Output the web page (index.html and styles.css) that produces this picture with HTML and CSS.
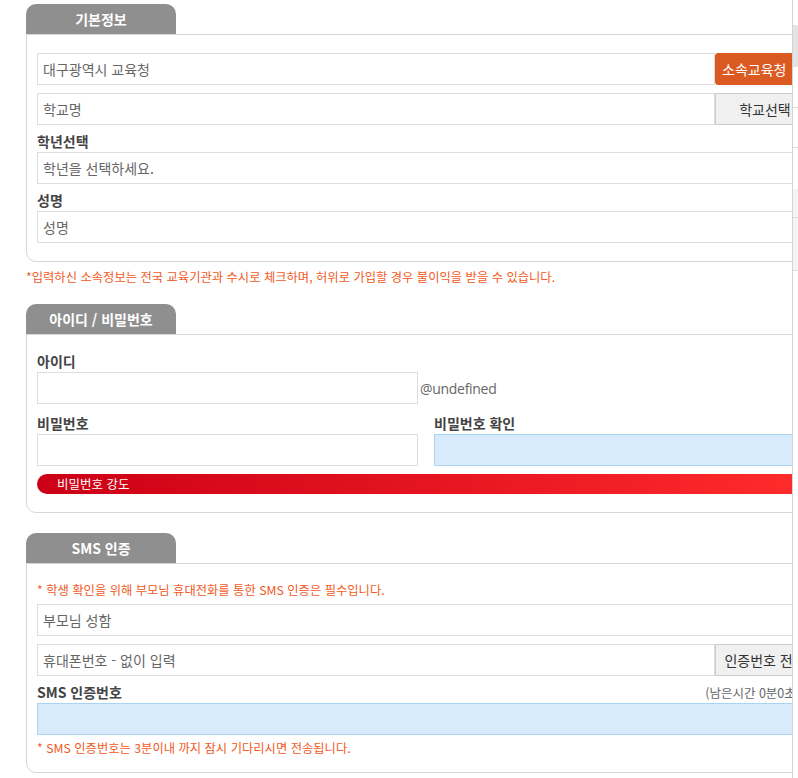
FILE: index.html
```html
<!DOCTYPE html>
<html lang="ko">
<head>
<meta charset="utf-8">
<title>회원가입</title>
<link rel="stylesheet" href="styles.css">
</head>
<body>
<div class="frame">
  <div class="clip">
    <div class="page">
      <section class="sec sec-first">
        <div class="tab">기본정보</div>
        <div class="box">
          <div class="row">
            <div class="field">대구광역시 교육청</div>
            <div class="btn btn-orange">소속교육청</div>
          </div>
          <div class="row row-gap">
            <div class="field">학교명</div>
            <div class="btn btn-gray">학교선택</div>
          </div>
          <div class="label">학년선택</div>
          <div class="field">학년을 선택하세요.</div>
          <div class="label">성명</div>
          <div class="field">성명</div>
        </div>
        <p class="notice notice-outer">*입력하신 소속정보는 전국 교육기관과 수시로 체크하며, 허위로 가입할 경우 불이익을 받을 수 있습니다.</p>
      </section>

      <section class="sec sec-second">
        <div class="tab">아이디 / 비밀번호</div>
        <div class="box box-id">
          <div class="label label-top">아이디</div>
          <div class="id-row">
            <div class="field field-half"></div>
            <span class="domain">@undefined</span>
          </div>
          <div class="pw-grid">
            <div class="pw-col">
              <div class="label label-pw">비밀번호</div>
              <div class="field"></div>
            </div>
            <div class="pw-col">
              <div class="label label-pw">비밀번호 확인</div>
              <div class="field field-blue"></div>
            </div>
          </div>
          <div class="strength">비밀번호 강도</div>
        </div>
      </section>

      <section class="sec sec-third">
        <div class="tab">SMS 인증</div>
        <div class="box box-sms">
          <p class="notice notice-inner">* 학생 확인을 위해 부모님 휴대전화를 통한 SMS 인증은 필수입니다.</p>
          <div class="field">부모님 성함</div>
          <div class="row row-gap">
            <div class="field">휴대폰번호 - 없이 입력</div>
            <div class="btn btn-gray">인증번호 전송</div>
          </div>
          <div class="label label-split">
            <span>SMS 인증번호</span>
            <span class="timer">(남은시간 0분0초)</span>
          </div>
          <div class="field field-blue"></div>
          <p class="notice notice-bottom">* SMS 인증번호는 3분이내 까지 잠시 기다리시면 전송됩니다.</p>
        </div>
      </section>
    </div>
  </div>
  <div class="side">
    <div class="s-blank s-h25"></div>
    <div class="s-thumb"></div>
    <div class="s-blank s-h40"></div>
    <div class="s-line"></div>
    <div class="s-blank s-h39"></div>
    <div class="s-line"></div>
    <div class="s-blank s-h41"></div>
    <div class="s-light s-h28"></div>
    <div class="s-line"></div>
    <div class="s-light s-h52"></div>
    <div class="s-line"></div>
  </div>
</div>
</body>
</html>
```

FILE: styles.css
```css
* { box-sizing: border-box; }

html, body {
  margin: 0;
  padding: 0;
  background: #ffffff;
}

body {
  font-family: "Noto Sans CJK KR", "Noto Sans", sans-serif;
  color: #444444;
  font-size: 14px;
  width: 798px;
  height: 778px;
  overflow: hidden;
}

.frame {
  display: flex;
  align-items: stretch;
  height: 778px;
}

.clip {
  width: 793px;
  flex: none;
  overflow: hidden;
  border-right: 1px solid #d3d3d3;
}

.page {
  width: 860px;
  padding: 4px 0 0 26px;
}

.side {
  flex: 1;
  display: flex;
  flex-direction: column;
}
.s-blank { background: #ffffff; }
.s-thumb { height: 42px; background: #e3e3e3; }
.s-line { height: 1px; background: #dcdcdc; }
.s-light { background: #f4f4f4; }
.s-h25 { height: 25px; }
.s-h40 { height: 40px; }
.s-h39 { height: 39px; }
.s-h41 { height: 41px; }
.s-h28 { height: 28px; }
.s-h52 { height: 52px; }

.sec-second { margin-top: 17px; }
.sec-third { margin-top: 20px; }

.tab {
  width: 150px;
  height: 30px;
  background: #8f8f8f;
  color: #ffffff;
  font-weight: bold;
  font-size: 14px;
  line-height: 30px;
  text-align: center;
  border-radius: 10px 10px 0 0;
}

.box {
  width: 800px;
  border: 1px solid #d6d6d6;
  border-radius: 0 0 0 10px;
  padding: 18px 10px 18px 10px;
}

.row {
  display: flex;
}
.row .field { flex: 1; }
.row-gap { margin-top: 8px; }

.field {
  height: 32px;
  border: 1px solid #dddddd;
  background: #ffffff;
  color: #666666;
  font-size: 14px;
  line-height: 30px;
  padding: 0 5px;
  white-space: nowrap;
}

.field-blue {
  background: #d7ebfc;
  border-color: #a9d4f4;
}

.btn {
  width: 100px;
  height: 32px;
  flex: none;
  font-size: 14px;
  line-height: 30px;
  text-align: center;
  white-space: nowrap;
}

.btn-orange {
  background: #db5a21;
  color: #ffffff;
  border: 1px solid #db5a21;
  border-radius: 3px 0 0 3px;
  text-align: left;
  padding-left: 6px;
}

.btn-gray {
  background: #f0f0f0;
  color: #333333;
  border: 1px solid #cccccc;
}

.label {
  margin-top: 6px;
  font-weight: bold;
  font-size: 14px;
  line-height: 21px;
  color: #444444;
}

.label-top { margin-top: 0; }

.box-id { padding-top: 16px; }

.id-row {
  display: flex;
  align-items: center;
}
.field-half { width: 381px; }
.domain {
  margin-left: 2px;
  color: #666666;
  font-size: 14px;
  font-family: "Open Sans", "Noto Sans", sans-serif;
  letter-spacing: -0.3px;
}

.pw-grid {
  display: grid;
  grid-template-columns: 381px 381px;
  column-gap: 16px;
  margin-top: 9px;
}
.label-pw { margin-top: 0; }

.strength {
  margin-top: 8px;
  height: 20px;
  border-radius: 10px 0 0 10px;
  background: linear-gradient(to right, #cc0016 0%, #e2121f 45%, #ff2c2c 100%);
  color: #ffffff;
  font-size: 12.5px;
  line-height: 20px;
  padding-left: 20px;
}

.notice {
  margin: 0;
  color: #f15a24;
  font-size: 12.3px;
  line-height: 20px;
  white-space: nowrap;
}

.notice-outer { margin-top: 5px; }

.box-sms { padding-top: 16px; padding-bottom: 14px; }
.notice-inner { margin-bottom: 4px; }
.notice-bottom { margin-top: 3px; }

.label-split {
  display: flex;
  justify-content: space-between;
  align-items: baseline;
}
.timer {
  font-weight: normal;
  font-size: 12.5px;
  color: #666666;
  margin-right: 15px;
}
```
